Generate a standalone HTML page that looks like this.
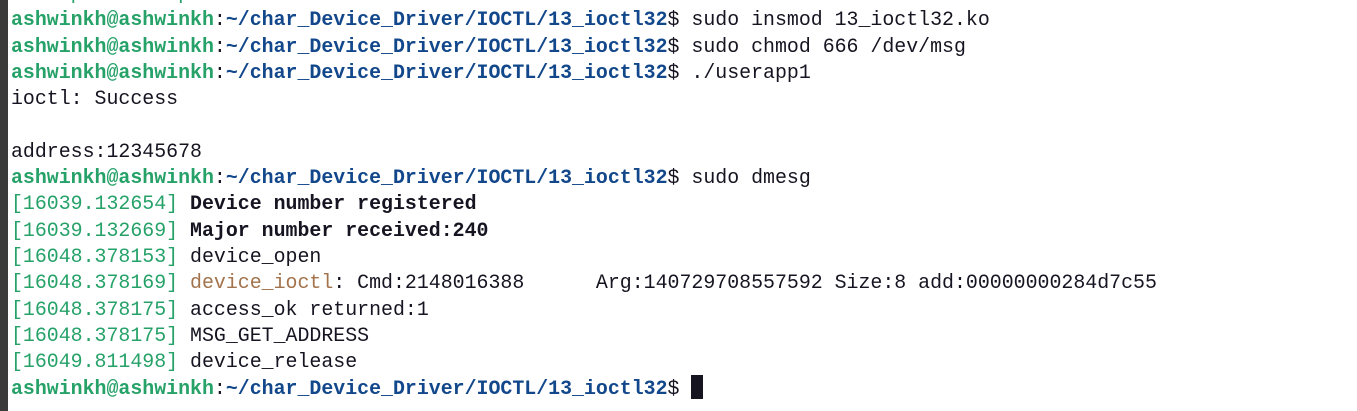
<html><head><style>
body{margin:0;width:1357px;height:411px;background:#fff;overflow:hidden;position:relative}
.bar{position:absolute;left:0;top:0;width:8px;height:411px;background:#3a3a3a}
pre{position:absolute;left:11px;top:-19px;margin:0;font-family:"Liberation Mono",monospace;font-size:19.9px;line-height:26.3px;color:#171421}
.g{color:#26a269;font-weight:bold}.b{color:#12488b;font-weight:bold}.t{color:#26a269}.br{color:#a2734c}
.cur{display:inline-block;width:12px;height:24px;background:#171421;vertical-align:-5px}
</style></head><body><div class="bar"></div>
<pre><span class="t">     p        pelose</span>
<span class="g">ashwinkh@ashwinkh</span>:<span class="b">~/char_Device_Driver/IOCTL/13_ioctl32</span>$ sudo insmod 13_ioctl32.ko
<span class="g">ashwinkh@ashwinkh</span>:<span class="b">~/char_Device_Driver/IOCTL/13_ioctl32</span>$ sudo chmod 666 /dev/msg
<span class="g">ashwinkh@ashwinkh</span>:<span class="b">~/char_Device_Driver/IOCTL/13_ioctl32</span>$ ./userapp1
ioctl: Success

address:12345678
<span class="g">ashwinkh@ashwinkh</span>:<span class="b">~/char_Device_Driver/IOCTL/13_ioctl32</span>$ sudo dmesg
<span class="t">[16039.132654]</span> <b>Device number registered</b>
<span class="t">[16039.132669]</span> <b>Major number received:240</b>
<span class="t">[16048.378153]</span> device_open
<span class="t">[16048.378169]</span> <span class="br">device_ioctl</span>: Cmd:2148016388      Arg:140729708557592 Size:8 add:00000000284d7c55
<span class="t">[16048.378175]</span> access_ok returned:1
<span class="t">[16048.378175]</span> MSG_GET_ADDRESS
<span class="t">[16049.811498]</span> device_release
<span class="g">ashwinkh@ashwinkh</span>:<span class="b">~/char_Device_Driver/IOCTL/13_ioctl32</span>$ <span class="cur"></span></pre>
</body></html>
